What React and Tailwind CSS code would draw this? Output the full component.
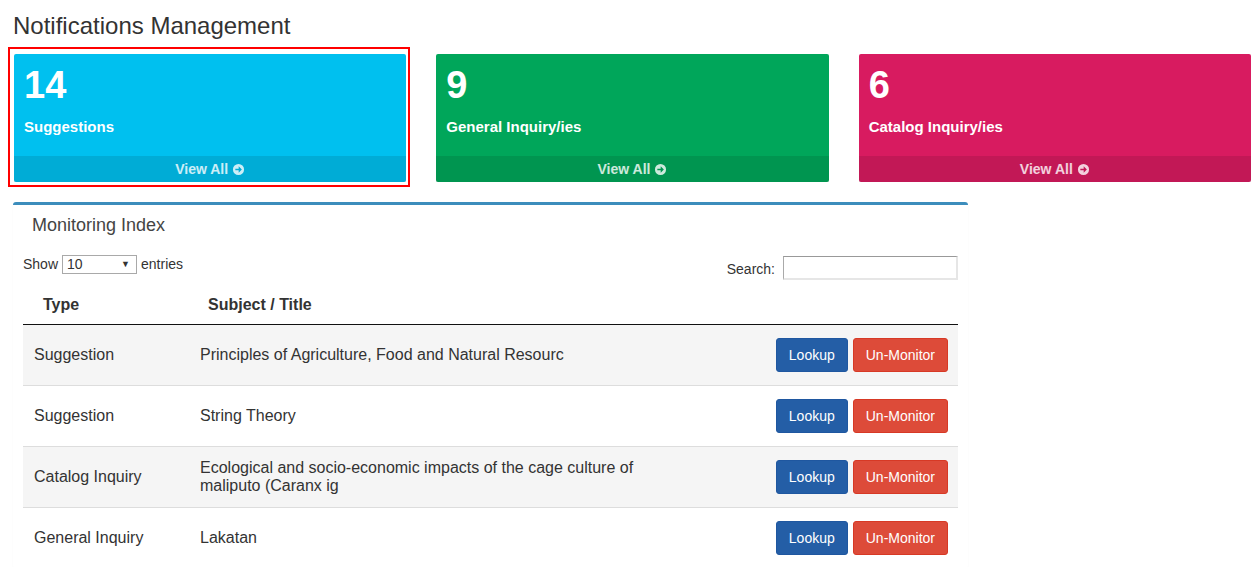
import React from "react";

const cards = [
  { count: "14", label: "Suggestions", bg: "bg-[#00c0ef]", highlight: true },
  { count: "9", label: "General Inquiry/ies", bg: "bg-[#00a65a]" },
  { count: "6", label: "Catalog Inquiry/ies", bg: "bg-[#d81b60]" },
];

const rows = [
  { type: "Suggestion", title: "Principles of Agriculture, Food and Natural Resourc", striped: true },
  { type: "Suggestion", title: "String Theory" },
  {
    type: "Catalog Inquiry",
    title: "Ecological and socio-economic impacts of the cage culture of maliputo (Caranx ig",
    striped: true,
  },
  { type: "General Inquiry", title: "Lakatan" },
];

const ArrowCircle = () => (
  <svg width="13" height="13" viewBox="0 0 14 14" className="inline-block ml-[4px] -mt-[2px]">
    <path
      fillRule="evenodd"
      fill="currentColor"
      d="M1 7a6 6 0 1 0 12 0a6 6 0 1 0 -12 0Z M3.6 6.1H7.2V3.6L10.6 7L7.2 10.4V7.9H3.6Z"
    />
  </svg>
);

const StatCard = ({ count, label, bg, highlight }) => (
  <div className={`relative ${bg} rounded-[2px] text-white`}>
    {highlight && (
      <div className="pointer-events-none absolute -left-[6px] -right-[4px] -top-[7px] -bottom-[5px] border-2 border-[#ff0000]" />
    )}
    <div className="h-[102px] px-[10px] pt-[10px]">
      <div className="text-[38px] font-bold leading-[42px]">{count}</div>
      <div className="mt-[11px] text-[15px] font-bold leading-[20px]">{label}</div>
    </div>
    <div className="h-[26px] bg-black/10 text-center text-[14px] font-bold leading-[26px] text-white/80">
      View All
      <ArrowCircle />
    </div>
  </div>
);

const App = () => {
  return (
    <div
      className="min-h-[567px] bg-white text-[#333]"
      style={{ fontFamily: '"Liberation Sans", Arial, sans-serif' }}
    >
      <h1 className="pl-[13px] pt-[12px] text-[24px] leading-[27px] font-normal text-[#333]">
        Notifications Management
      </h1>

      <div className="ml-[14px] mt-[15px] grid w-[1237px] grid-cols-3 gap-[30px]">
        {cards.map((c) => (
          <StatCard key={c.label} {...c} />
        ))}
      </div>

      <div className="ml-[13px] mt-[20px] w-[955px] rounded-[3px] border-t-[3px] border-[#3c8dbc] bg-white shadow-[0_1px_1px_rgba(0,0,0,0.1)]">
        <div className="h-[40px] pl-[19px] pt-[10px] text-[18px] leading-[20px] text-[#444]">
          Monitoring Index
        </div>
        <div className="px-[10px] pt-[10px]">
          <div className="flex items-start justify-between text-[14px]">
            <div className="flex items-center gap-[4px] leading-[19px]">
              <span>Show</span>
              <div className="flex h-[19px] w-[75px] items-center justify-between border border-[#a9a9a9] bg-white pl-[4px] pr-[6px] text-[14px] leading-[17px]">
                <span>10</span>
                <span className="text-[9px]">▼</span>
              </div>
              <span>entries</span>
            </div>
            <div className="flex items-center gap-[8px] pt-[1px]">
              <span className="pt-[2px]">Search:</span>
              <div className="h-[24px] w-[175px] border-t border-l border-t-[#999] border-l-[#aaa] border-r-2 border-b-2 border-r-[#e6e6e6] border-b-[#e6e6e6] bg-white" />
            </div>
          </div>

          <div className="mt-[8px] flex border-b border-[#111] text-[16px] font-bold leading-[18px]">
            <div className="w-[167px] pl-[20px] pt-[8px] pb-[10px]">Type</div>
            <div className="pl-[18px] pt-[8px] pb-[10px]">Subject / Title</div>
          </div>

          {rows.map((r, i) => (
            <div
              key={i}
              className={`flex h-[61px] items-center border-b border-[#ddd] text-[16px] leading-[18px] ${
                r.striped ? "bg-[#f5f5f5]" : "bg-white"
              }`}
            >
              <div className="w-[167px] px-[11px]">{r.type}</div>
              <div className="w-[470px] px-[10px]">{r.title}</div>
              <div className="flex flex-1 justify-end gap-[5px] pr-[10px] text-[14px]">
                <button className="h-[34px] rounded-[3px] border border-[#1f57a0] bg-[#245ea6] px-[12px] text-white">
                  Lookup
                </button>
                <button className="h-[34px] rounded-[3px] border border-[#d73925] bg-[#dd4b39] px-[12px] text-white">
                  Un-Monitor
                </button>
              </div>
            </div>
          ))}
        </div>
      </div>
    </div>
  );
};

export default App;
